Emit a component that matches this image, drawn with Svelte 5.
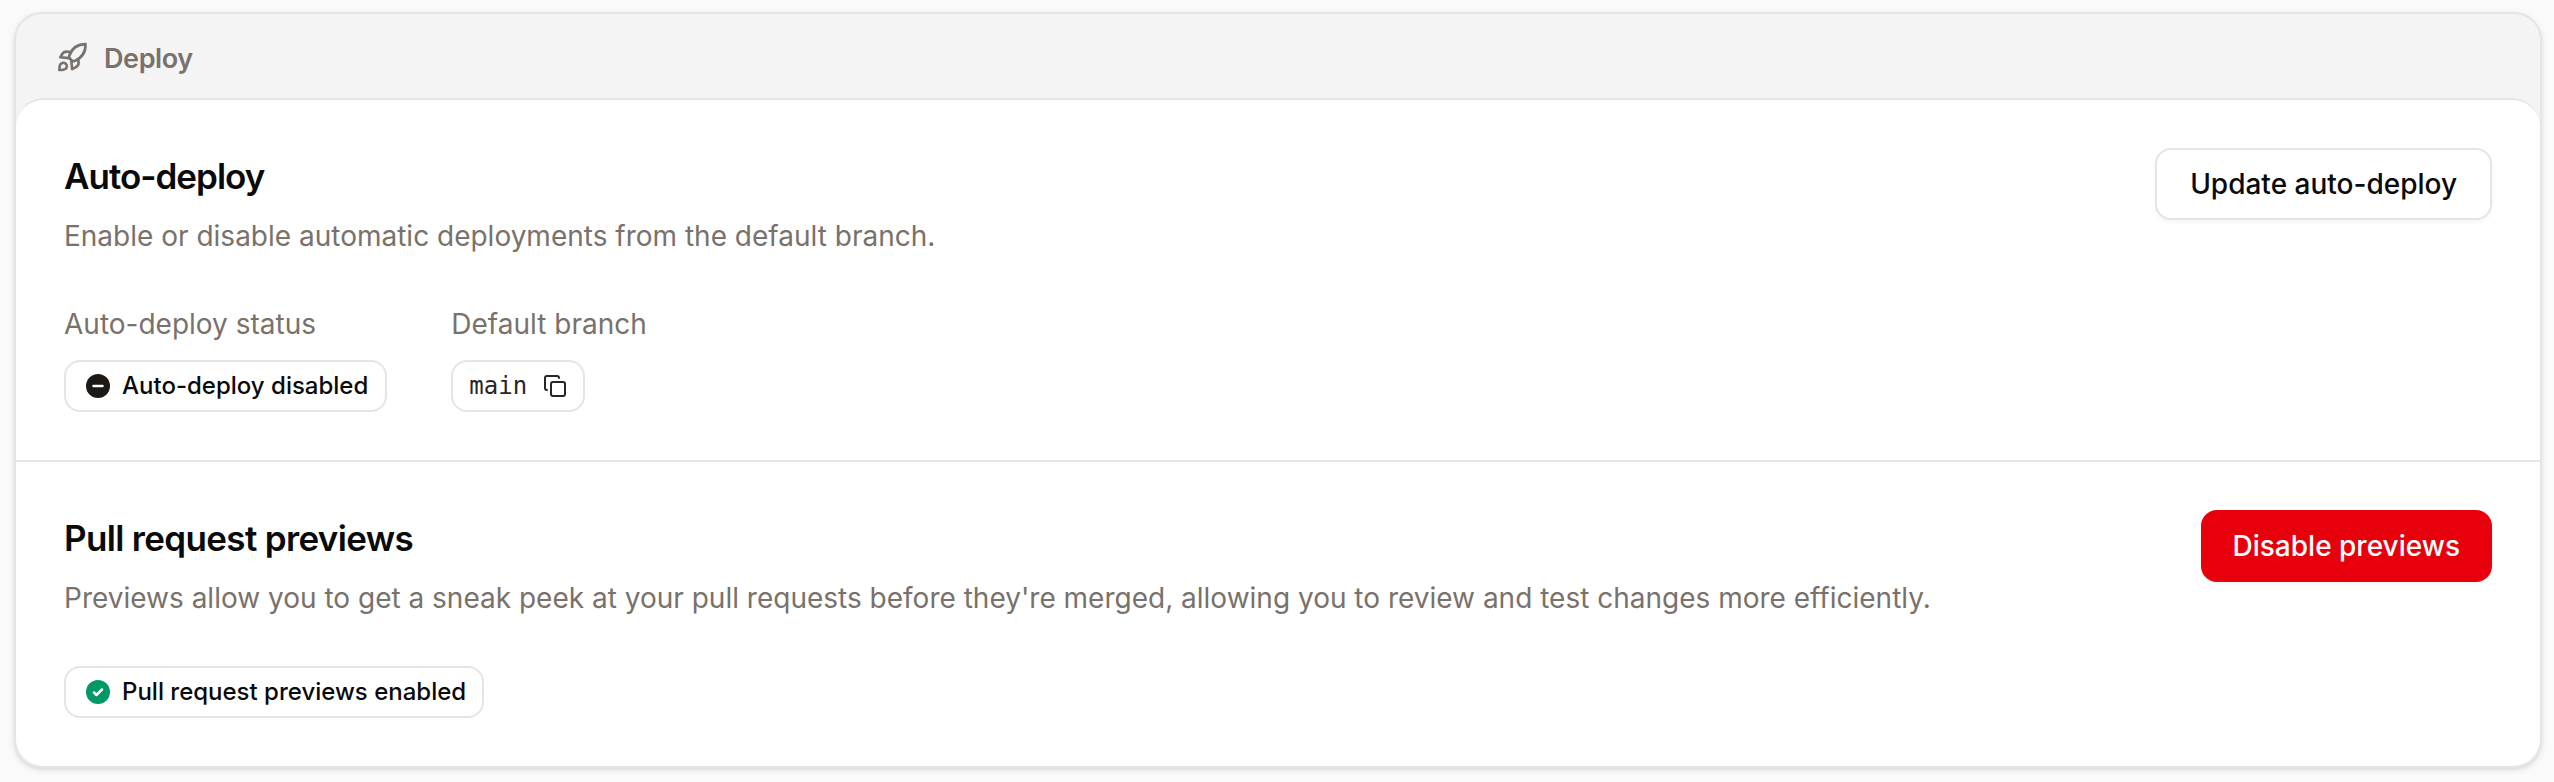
<script>
  const sections = [
    {
      title: "Auto-deploy",
      description: "Enable or disable automatic deployments from the default branch.",
      action: "Update auto-deploy",
      danger: false,
    },
    {
      title: "Pull request previews",
      description:
        "Previews allow you to get a sneak peek at your pull requests before they're merged, allowing you to review and test changes more efficiently.",
      action: "Disable previews",
      danger: true,
    },
  ];
</script>

<main>
  <div class="card">
    <header>
      <svg class="rocket" viewBox="0 0 24 24" fill="none" stroke="currentColor" stroke-width="2" stroke-linecap="round" stroke-linejoin="round">
        <path d="M22.100 2.400C15.800 2.500 12 5.600 10 10.800c-.4 1.100-.2 1.800.5 2.500l1.200 1.200c.7.7 1.400.9 2.400.4C19.300 12.500 22.400 8.700 22.100 2.400z" />
        <path d="M10.900 8.500L9.300 8.100C7 7.600 5.600 8.100 4.500 10l-1.300 2.200 6.600.7" />
        <path d="M11.500 14.700l.6 6.400 2.600-1.300c1.900-1 2.500-2.300 2.200-4.300l-.3-2" />
        <path d="M2.500 21.700c0-1.800.1-3.200.8-4.200 1-1.400 2.900-1.500 4-.5 1.200 1.100 1.100 3-.3 4-1.100.7-2.700.8-4.500.7z" />
      </svg>
      <span>Deploy</span>
    </header>

    <div class="body">
      {#each sections as section, i}
        <section>
          <div class="top">
            <div>
              <h2 class:long={i === 1}>{section.title}</h2>
              <p>{section.description}</p>
            </div>
            <button class:danger={section.danger}>{section.action}</button>
          </div>

          {#if i === 0}
            <dl>
              <div>
                <dt>Auto-deploy status</dt>
                <dd class="badge status">
                  <svg class="dot" viewBox="0 0 24 24">
                    <circle cx="12" cy="12" r="12" fill="#1c1917" />
                    <path d="M7.500 12h9" stroke="#fff" stroke-width="2.500" stroke-linecap="round" />
                  </svg>
                  <span>Auto-deploy disabled</span>
                </dd>
              </div>
              <div>
                <dt>Default branch</dt>
                <dd class="badge code">
                  <span>main</span>
                  <svg class="copy" viewBox="0 0 24 24" fill="none" stroke="currentColor" stroke-width="2" stroke-linecap="round" stroke-linejoin="round">
                    <rect x="8" y="8" width="14" height="14" rx="2" />
                    <path d="M4 16c-1.100 0-2-.9-2-2V4c0-1.100.9-2 2-2h10c1.100 0 2 .9 2 2" />
                  </svg>
                </dd>
              </div>
            </dl>
          {:else}
            <div class="badge previews">
              <svg class="dot" viewBox="0 0 24 24">
                <circle cx="12" cy="12" r="12" fill="#009966" />
                <path d="M8 12.500l2.500 2.500 5.500-5.500" fill="none" stroke="#fff" stroke-width="2.500" stroke-linecap="round" stroke-linejoin="round" />
              </svg>
              <span>Pull request previews enabled</span>
            </div>
          {/if}
        </section>
      {/each}
    </div>
  </div>
</main>

<style>
  :global(body) {
    background: #fafafa;
  }

  main {
    box-sizing: border-box;
    height: 782px;
    padding: 12px 12px 14px 14px;
    font-family: Inter, sans-serif;
    font-size: 28px;
    color: #0a0a0a;
  }

  .card {
    box-sizing: border-box;
    height: 756px;
    border: 2px solid #e5e5e5;
    border-radius: 28px;
    background: #f4f4f4;
    box-shadow: 0 2px 6px rgba(0, 0, 0, 0.1), 0 2px 4px -2px rgba(0, 0, 0, 0.1);
  }

  header {
    display: flex;
    align-items: center;
    height: 84px;
    padding: 4px 0 0 40px;
    box-sizing: border-box;
    gap: 16px;
    color: #79716b;
    font-weight: 600;
    font-size: 27px;
    letter-spacing: -0.4px;
  }

  .rocket {
    width: 32px;
    height: 32px;
    margin-bottom: 2px;
  }

  .body {
    box-sizing: border-box;
    height: 668px;
    border-top: 2px solid #e5e5e5;
    border-radius: 28px;
    background: #fff;
  }

  section {
    box-sizing: border-box;
    height: 360px;
    padding: 48px;
  }

  section + section {
    height: 306px;
    border-top: 2px solid #e5e5e5;
  }

  .top {
    display: flex;
    justify-content: space-between;
    align-items: flex-start;
  }

  h2 {
    margin: 6px 0 0;
    font-size: 35px;
    line-height: 44px;
    font-weight: 600;
    letter-spacing: -1px;
  }

  .long {
    letter-spacing: -0.66px;
  }

  p {
    margin: 18px 0 0;
    line-height: 40px;
    color: #79716b;
  }

  button {
    box-sizing: border-box;
    height: 72px;
    padding: 0 33px;
    border: 2px solid #e5e5e5;
    border-radius: 16px;
    background: #fff;
    color: #0a0a0a;
    font-family: inherit;
    font-size: 28px;
    font-weight: 500;
    box-shadow: 0 2px 4px rgba(0, 0, 0, 0.05);
  }

  .danger {
    padding: 0 30px;
    border-color: #e7000b;
    background: #e7000b;
    color: #fff;
  }

  dl {
    display: flex;
    gap: 64px;
    margin: 48px 0 0;
  }

  dt {
    line-height: 40px;
    color: #79716b;
  }

  dd {
    margin: 16px 0 0;
  }

  .badge {
    display: flex;
    align-items: center;
    box-sizing: border-box;
    width: max-content;
    height: 52px;
    padding: 0 16px 0 20px;
    gap: 12px;
    border: 2px solid #e5e5e5;
    border-radius: 16px;
    font-size: 24px;
    font-weight: 500;
  }

  .badge span {
    padding-bottom: 2px;
  }

  .status {
    padding-right: 17px;
  }

  .dot {
    width: 24px;
    height: 24px;
  }

  .code {
    padding: 0 16px;
    gap: 16px;
    color: #292524;
    font-family: "DejaVu Sans Mono", monospace;
    font-weight: 400;
  }

  .code span {
    padding-bottom: 0;
  }

  .copy {
    width: 24px;
    height: 24px;
  }

  .previews {
    margin-top: 48px;
  }
</style>
